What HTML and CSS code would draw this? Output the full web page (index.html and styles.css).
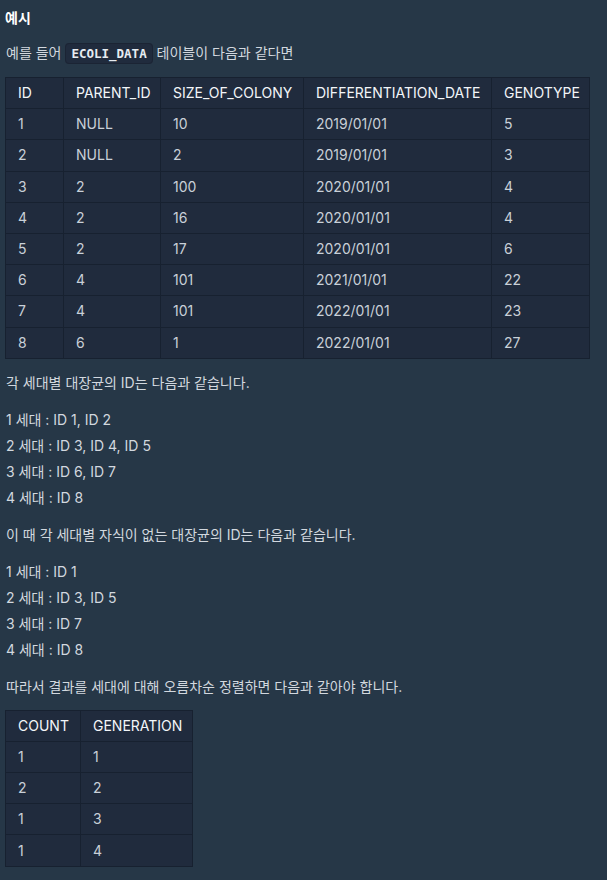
FILE: index.html
```html
<!DOCTYPE html>
<html lang="ko">
<head>
<meta charset="utf-8">
<link rel="stylesheet" href="styles.css">
</head>
<body>
<div class="content">
  <h5 class="title">예시</h5>
  <p class="para">예를 들어 <code class="code">ECOLI_DATA</code> 테이블이 다음과 같다면</p>
  <table class="tbl tbl-wide">
    <colgroup>
      <col class="c-id"><col class="c-parent"><col class="c-size"><col class="c-date"><col class="c-geno">
    </colgroup>
    <thead>
      <tr><th>ID</th><th>PARENT_ID</th><th>SIZE_OF_COLONY</th><th>DIFFERENTIATION_DATE</th><th>GENOTYPE</th></tr>
    </thead>
    <tbody>
      <tr><td>1</td><td>NULL</td><td>10</td><td>2019/01/01</td><td>5</td></tr>
      <tr><td>2</td><td>NULL</td><td>2</td><td>2019/01/01</td><td>3</td></tr>
      <tr><td>3</td><td>2</td><td>100</td><td>2020/01/01</td><td>4</td></tr>
      <tr><td>4</td><td>2</td><td>16</td><td>2020/01/01</td><td>4</td></tr>
      <tr><td>5</td><td>2</td><td>17</td><td>2020/01/01</td><td>6</td></tr>
      <tr><td>6</td><td>4</td><td>101</td><td>2021/01/01</td><td>22</td></tr>
      <tr><td>7</td><td>4</td><td>101</td><td>2022/01/01</td><td>23</td></tr>
      <tr><td>8</td><td>6</td><td>1</td><td>2022/01/01</td><td>27</td></tr>
    </tbody>
  </table>
  <p class="para">각 세대별 대장균의 ID는 다음과 같습니다.</p>
  <p class="para lines">1 세대 : ID 1, ID 2<br>2 세대 : ID 3, ID 4, ID 5<br>3 세대 : ID 6, ID 7<br>4 세대 : ID 8</p>
  <p class="para">이 때 각 세대별 자식이 없는 대장균의 ID는 다음과 같습니다.</p>
  <p class="para lines">1 세대 : ID 1<br>2 세대 : ID 3, ID 5<br>3 세대 : ID 7<br>4 세대 : ID 8</p>
  <p class="para">따라서 결과를 세대에 대해 오름차순 정렬하면 다음과 같아야 합니다.</p>
  <table class="tbl tbl-small">
    <colgroup>
      <col class="c-count"><col class="c-gen">
    </colgroup>
    <thead>
      <tr><th>COUNT</th><th>GENERATION</th></tr>
    </thead>
    <tbody>
      <tr><td>1</td><td>1</td></tr>
      <tr><td>2</td><td>2</td></tr>
      <tr><td>1</td><td>3</td></tr>
      <tr><td>1</td><td>4</td></tr>
    </tbody>
  </table>
</div>
</body>
</html>
```

FILE: styles.css
```css
html, body {
  margin: 0;
  padding: 0;
  background: #263747;
}
body {
  font-family: Inter, "Noto Sans CJK KR", sans-serif;
  font-size: 14px;
  color: #d2d8df;
}
.content {
  padding: 6px 5px 0 5px;
}
.title {
  margin: 0 0 10px 0;
  font-size: 14px;
  font-weight: 700;
  line-height: 24px;
  color: #ffffff;
}
.para {
  margin: 0 0 11px 1px;
  line-height: 26px;
}
.tbl + .para {
  margin-top: 0;
}
.code {
  font-family: "DejaVu Sans Mono", monospace;
  font-size: 12.5px;
  background: #202b3d;
  border: 1px solid #1b2434;
  border-radius: 4px;
  padding: 2px 5px;
  color: #e7ecf1;
  font-weight: 600;
}
.tbl {
  border-collapse: collapse;
  background: #202b3d;
  margin: -1px 0 11px 0;
  table-layout: fixed;
}
.tbl-wide {
  width: 584px;
}
.tbl-small {
  width: 187px;
}
.c-id { width: 58px; }
.c-parent { width: 97px; }
.c-size { width: 143px; }
.c-date { width: 188px; }
.c-geno { width: 98px; }
.c-count { width: 75px; }
.c-gen { width: 112px; }
.tbl th, .tbl td {
  border: 1px solid #172130;
  padding: 0 12px;
  height: 30.2px;
  text-align: left;
  font-weight: 400;
  line-height: 20px;
  white-space: nowrap;
}
.tbl th {
  color: #f3f6f9;
}
.tbl td {
  color: #c9d0d8;
}
```
